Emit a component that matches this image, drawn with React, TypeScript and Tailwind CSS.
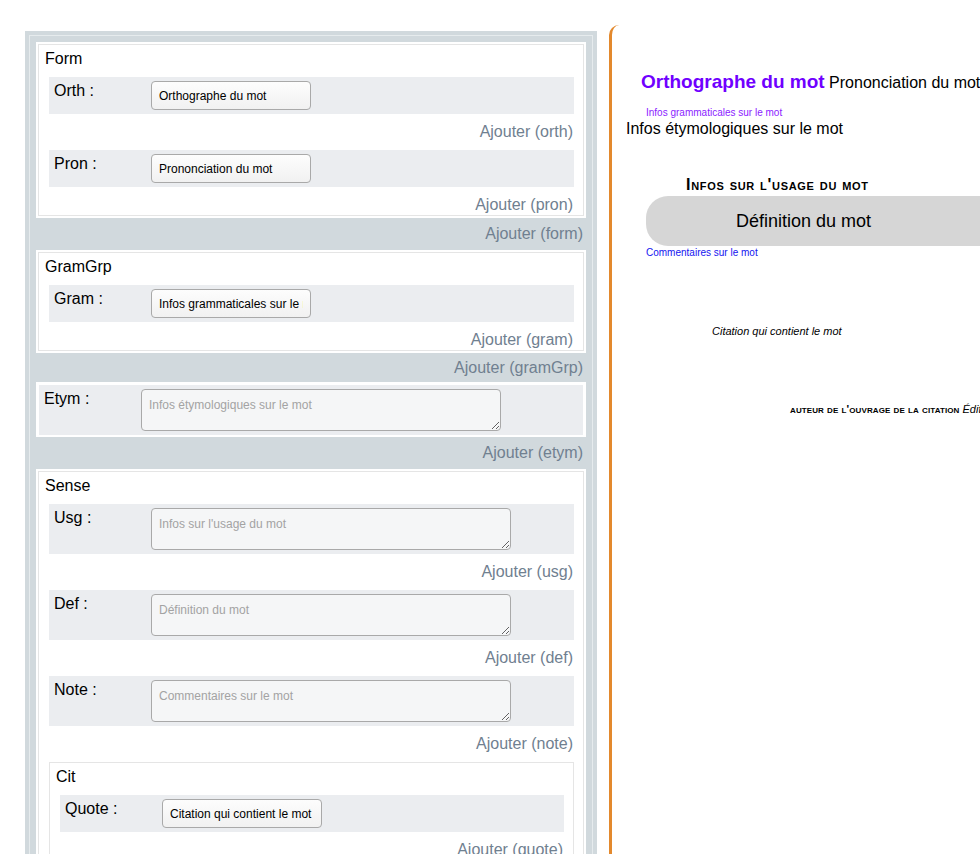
import React from 'react';

const sans = { fontFamily: '"Liberation Sans", Arial, sans-serif' };

function Ajouter({ label, className = '' }: { label: string; className?: string }) {
  return (
    <div className={`text-right text-[16px] leading-[18px] text-[#708090] ${className}`}>Ajouter ({label})</div>
  );
}

function Field({ label, value, area }: { label: string; value: string; area?: boolean }) {
  return (
    <div className="flex items-start bg-[#ebedf0] p-[4px] pl-[5px]">
      <div className="w-[97px] shrink-0 pt-[1px] text-[16px] leading-[18px] text-black">{label} :</div>
      {area ? (
        <textarea
          placeholder={value}
          className="h-[42px] w-[360px] rounded-[4px] border border-[#a9a9a9] bg-[#f5f6f7] px-[7px] pt-[8px] text-[12px] leading-[14px] text-black placeholder:text-[#a3a3a3]"
        />
      ) : (
        <input
          readOnly
          defaultValue={value}
          className="h-[29px] w-[160px] rounded-[4px] border border-[#a9a9a9] bg-gradient-to-b from-[#fdfdfd] to-[#f1f1f1] px-[7px] text-[12px] text-black outline-none"
        />
      )}
    </div>
  );
}

function Group({ title, children }: { title: string; children: React.ReactNode }) {
  return (
    <div className="border border-[#e5e5e5] pb-[1px]">
      <div className="mt-[5px] pl-[6px] text-[16px] leading-[18px] text-black">{title}</div>
      <div className="mt-[9px] ml-[10px] mr-[9px]">{children}</div>
    </div>
  );
}

function FieldWithAdd({ label, value, area, first }: { label: string; value: string; area?: boolean; first?: boolean }) {
  return (
    <div className={first ? '' : 'mt-[9px]'}>
      <Field label={label} value={value} area={area} />
      <Ajouter label={label.toLowerCase()} className="mt-[9px] mr-[1px]" />
    </div>
  );
}

function Editor() {
  return (
    <div className="ml-[25px] mt-[31px] w-[572px] shrink-0 border-4 border-b-0 border-[#d1d9dd]">
      <div className="border border-b-0 border-[#e6ebed] bg-[#d1d9dd] px-[6px] pt-[6px]">
        <div className="bg-white p-[2px]">
          <Group title="Form">
            <FieldWithAdd first label="Orth" value="Orthographe du mot" />
            <FieldWithAdd label="Pron" value="Prononciation du mot" />
          </Group>
        </div>
        <Ajouter label="form" className="mt-[7px] mb-[7px] mr-[3px]" />

        <div className="bg-white p-[2px]">
          <Group title="GramGrp">
            <FieldWithAdd first label="Gram" value="Infos grammaticales sur le mot" />
          </Group>
        </div>
        <Ajouter label="gramGrp" className="mt-[6px] mb-[5px] mr-[3px]" />

        <div className="bg-white p-[3px] pb-[2px]">
          <Field label="Etym" value="Infos étymologiques sur le mot" area />
        </div>
        <Ajouter label="etym" className="mt-[7px] mb-[7px] mr-[3px]" />

        <div className="bg-white p-[2px]">
          <Group title="Sense">
            <FieldWithAdd first label="Usg" value="Infos sur l'usage du mot" area />
            <FieldWithAdd label="Def" value="Définition du mot" area />
            <FieldWithAdd label="Note" value="Commentaires sur le mot" area />
            <div className="mt-[9px]">
              <Group title="Cit">
                <FieldWithAdd first label="Quote" value="Citation qui contient le mot" />
              </Group>
            </div>
          </Group>
        </div>
      </div>
    </div>
  );
}

function Preview() {
  return (
    <div className="ml-[12px] mt-[25px] h-[900px] min-w-0 flex-1 overflow-hidden rounded-tl-[10px] border-l-[3px] border-[#e3892d] whitespace-nowrap text-black">
      <div className="ml-[29px] mt-[46px] text-[16px] leading-[22px]">
        <span className="text-[19px] font-bold text-[#7000ff]">Orthographe du mot</span> Prononciation du mot
      </div>
      <div className="ml-[34px] mt-[13px] text-[10px] leading-[12px] text-[#8b1cff]">Infos grammaticales sur le mot</div>
      <div className="ml-[14px] mt-[1px] text-[16px] leading-[18px]">Infos étymologiques sur le mot</div>
      <div className="ml-[74px] mt-[38px] text-[16px] font-bold leading-[18px] tracking-[0.7px] [font-variant:small-caps]">
        Infos sur l'usage du mot
      </div>
      <div className="ml-[34px] mt-[2px] flex h-[50px] items-center rounded-l-[22px] bg-[#d6d6d6] pl-[90px] text-[18px]">
        Définition du mot
      </div>
      <div className="ml-[34px] mt-[1px] text-[10px] leading-[12px] text-[#1414f0]">Commentaires sur le mot</div>
      <div className="ml-[100px] mt-[66px] text-[11px] italic leading-[13px]">Citation qui contient le mot</div>
      <div className="ml-[178px] mt-[65px] text-[11px] leading-[13px]">
        <span className="font-bold tracking-[0.1px] [font-variant:small-caps]">auteur de l'ouvrage de la citation</span>{' '}
        <span className="italic">Éditeur</span>
      </div>
    </div>
  );
}

export default function App() {
  return (
    <div className="flex h-[854px] w-[980px] items-start overflow-hidden bg-white" style={sans}>
      <Editor />
      <Preview />
    </div>
  );
}
